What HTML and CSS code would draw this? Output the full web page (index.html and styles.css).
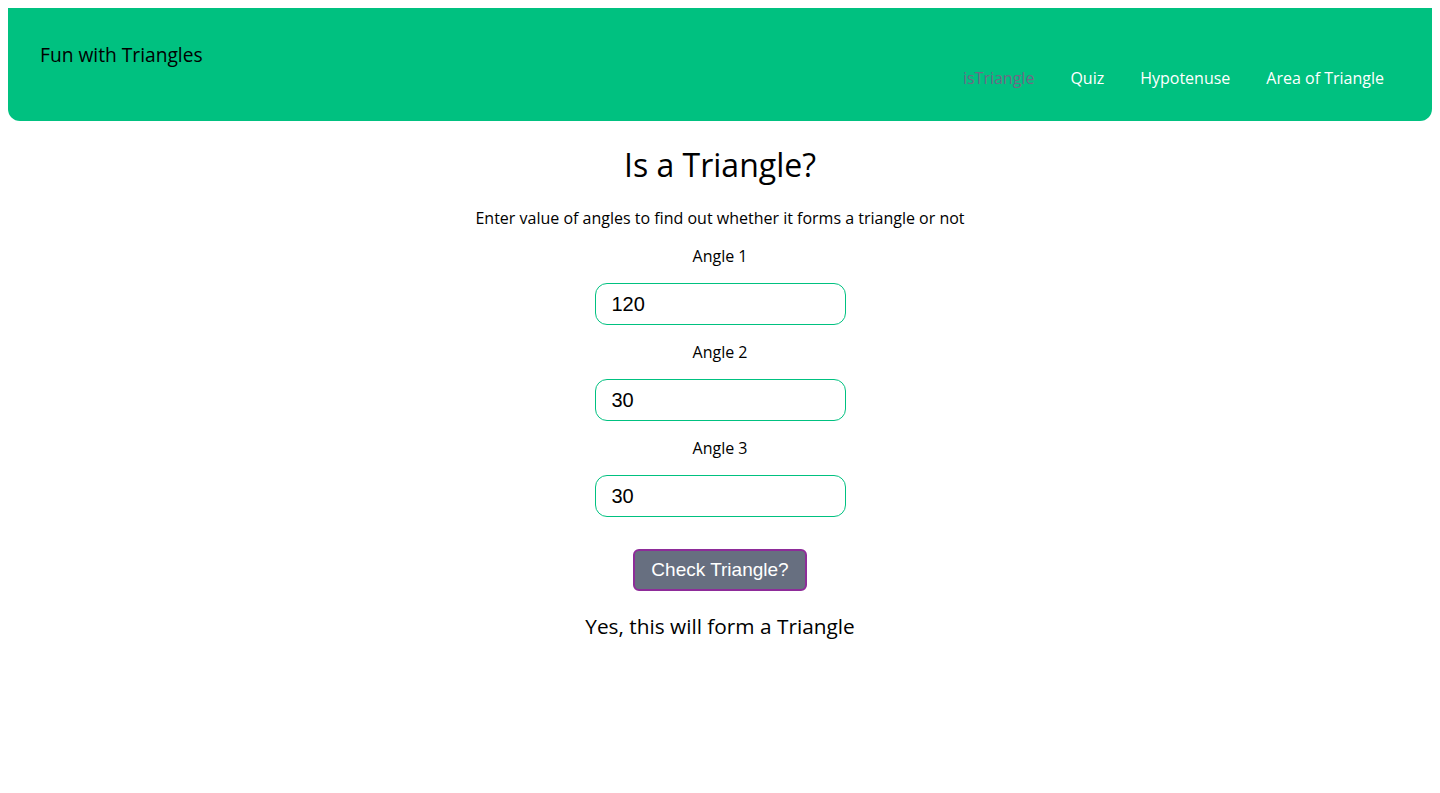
FILE: index.html
```html
<!DOCTYPE html>
<html>
<head>
<meta charset="utf-8">
<title>Fun with Triangles</title>
<link rel="stylesheet" href="styles.css">
</head>
<body>
<header class="topbar">
  <div class="brand">Fun with Triangles</div>
  <nav class="nav">
    <a class="nav-link active" href="#">isTriangle</a>
    <a class="nav-link" href="#">Quiz</a>
    <a class="nav-link" href="#">Hypotenuse</a>
    <a class="nav-link" href="#">Area of Triangle</a>
  </nav>
</header>
<main class="main">
  <h1 class="title">Is a Triangle?</h1>
  <p class="intro">Enter value of angles to find out whether it forms a triangle or not</p>
  <div class="field">
    <label class="label">Angle 1</label>
    <input class="input" type="text" value="120">
  </div>
  <div class="field">
    <label class="label">Angle 2</label>
    <input class="input" type="text" value="30">
  </div>
  <div class="field">
    <label class="label">Angle 3</label>
    <input class="input" type="text" value="30">
  </div>
  <button class="btn">Check Triangle?</button>
  <div class="result">Yes, this will form a Triangle</div>
</main>
</body>
</html>
```

FILE: styles.css
```css
body {
  margin: 8px;
  font-family: "Open Sans", "Noto Sans", sans-serif;
  color: #000;
  background: #fff;
}
.topbar {
  box-sizing: border-box;
  height: 113px;
  background: #00c180;
  border-radius: 0 0 12px 12px;
  padding: 33px 48px 32px 32px;
  display: flex;
  justify-content: space-between;
}
.brand {
  font-size: 19.2px;
  line-height: 27px;
  align-self: flex-start;
}
.nav {
  align-self: flex-end;
  display: flex;
  gap: 36px;
}
.nav-link {
  color: #fff;
  text-decoration: none;
  font-size: 16px;
  line-height: 22px;
}
.nav-link.active {
  color: #6e6a86;
}
.main {
  display: flex;
  flex-direction: column;
  align-items: center;
}
.title {
  margin: 22px 0 0;
  font-size: 32px;
  line-height: 44px;
  font-weight: 400;
}
.intro {
  margin: 20px 0 0;
  font-size: 16px;
  line-height: 22px;
}
.field {
  display: flex;
  flex-direction: column;
  align-items: center;
  margin-top: 16px;
}
.label {
  font-size: 16px;
  line-height: 22px;
}
.input {
  box-sizing: border-box;
  margin-top: 16px;
  width: 251px;
  height: 42px;
  border: 1px solid #00c180;
  border-radius: 12px;
  padding: 0 16px;
  font-family: "Liberation Sans", Arial, sans-serif;
  font-size: 20px;
  color: #000;
  outline: none;
}
.btn {
  box-sizing: border-box;
  margin-top: 32px;
  width: 174px;
  height: 42px;
  background: #676f80;
  border: 2px solid #8e2c99;
  border-radius: 6px;
  color: #fff;
  font-family: "Liberation Sans", Arial, sans-serif;
  font-size: 19px;
}
.result {
  margin-top: 21px;
  font-size: 20.8px;
  line-height: 28px;
}
```
